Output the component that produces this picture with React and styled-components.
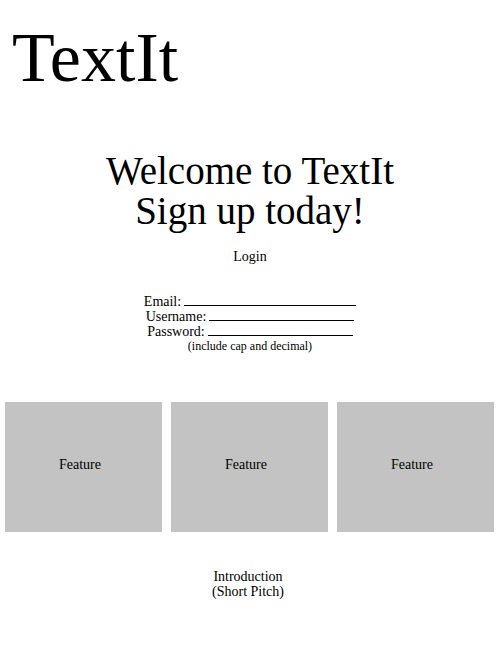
import React from "react";
import styled, { createGlobalStyle } from "styled-components";

const GlobalStyle = createGlobalStyle`
    body {
        margin: 0;
        background: #ffffff;
        color: #000000;
        font-family: "Liberation Serif", "DejaVu Serif", serif;
    }
`;

const Page = styled.div`
    width: 500px;
    display: flex;
    flex-direction: column;
`;

const Logo = styled.h1`
    margin: 23px 0 0 12px;
    font-size: 70px;
    font-weight: normal;
    line-height: 70px;
`;

const Hero = styled.section`
    margin-top: 58px;
    display: flex;
    flex-direction: column;
    align-items: center;
    text-align: center;
`;

const Headline = styled.h2`
    margin: 0;
    font-size: 39px;
    font-weight: normal;
    line-height: 40px;
`;

const LoginLink = styled.a`
    margin-top: 18px;
    font-size: 14px;
    color: #000000;
    text-decoration: none;
`;

const SignupForm = styled.form`
    margin-top: 29px;
    display: flex;
    flex-direction: column;
    align-items: center;
    font-size: 14px;
    line-height: 15px;
`;

const Field = styled.label`
    display: flex;
    align-items: baseline;
    gap: 3px;
`;

const Blank = styled.span`
    display: inline-block;
    width: ${(p) => p.$width}px;
    height: 11px;
    border-bottom: 1px solid #000000;
`;

const Hint = styled.span`
    font-size: 12px;
    line-height: 14px;
`;

const Features = styled.section`
    margin-top: 49px;
    padding: 0 6px 0 5px;
    display: grid;
    grid-template-columns: 157px 157px 157px;
    justify-content: space-between;
`;

const FeatureBox = styled.div`
    height: 130px;
    box-sizing: border-box;
    padding: 0 7px 4px 0;
    background: #c3c3c3;
    display: flex;
    align-items: center;
    justify-content: center;
    font-size: 14px;
`;

const Pitch = styled.p`
    margin: 37px 0 0 -4px;
    text-align: center;
    font-size: 14px;
    line-height: 15px;
`;

const App = () => {
    return (
        <React.Fragment>
            <GlobalStyle />
            <Page>
                <Logo>TextIt</Logo>

                <Hero>
                    <Headline>
                        Welcome to TextIt
                        <br />
                        Sign up today!
                    </Headline>
                    <LoginLink href="#">Login</LoginLink>

                    <SignupForm>
                        <Field>
                            Email: <Blank $width={172} />
                        </Field>
                        <Field>
                            Username: <Blank $width={145} />
                        </Field>
                        <Field>
                            Password: <Blank $width={145} />
                        </Field>
                        <Hint>(include cap and decimal)</Hint>
                    </SignupForm>
                </Hero>

                <Features>
                    <FeatureBox>Feature</FeatureBox>
                    <FeatureBox>Feature</FeatureBox>
                    <FeatureBox>Feature</FeatureBox>
                </Features>

                <Pitch>
                    Introduction
                    <br />
                    (Short Pitch)
                </Pitch>
            </Page>
        </React.Fragment>
    );
};

export default App;
